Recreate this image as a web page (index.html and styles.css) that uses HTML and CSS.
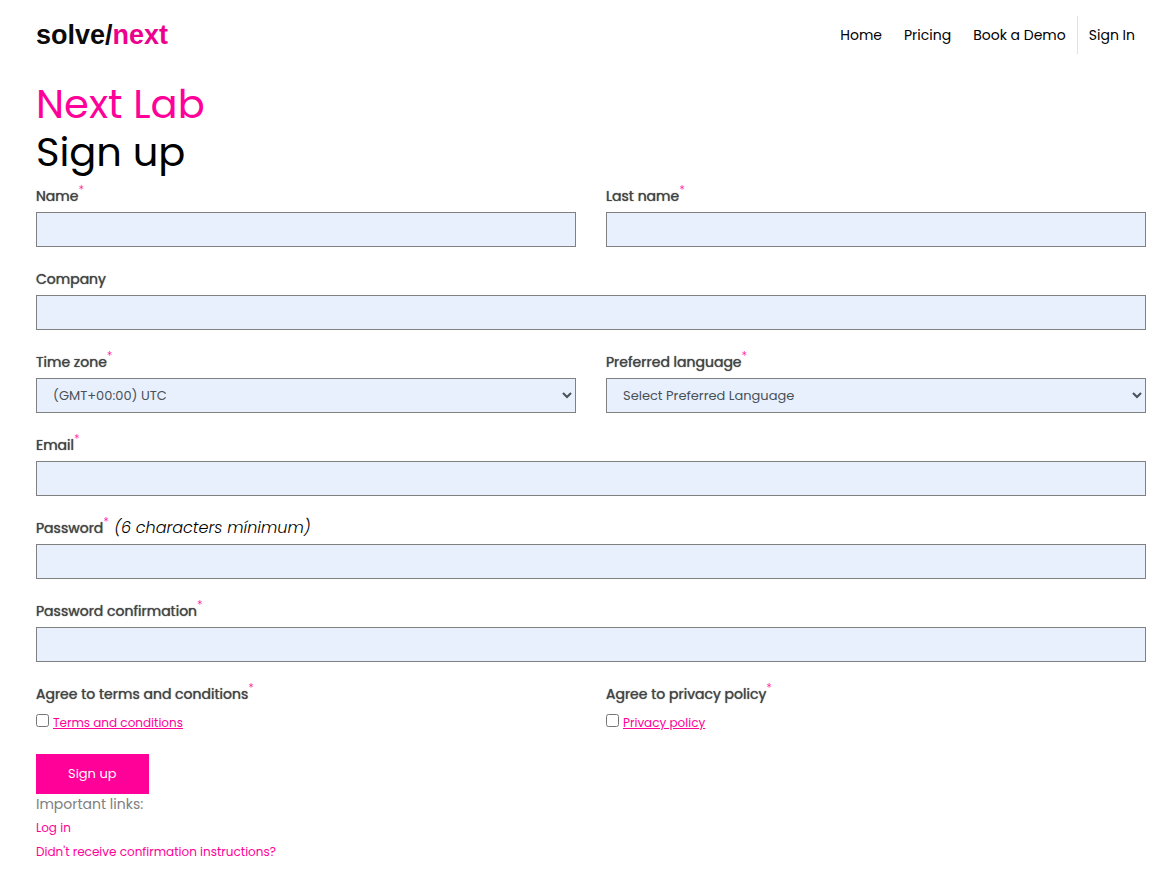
FILE: index.html
```html
<!DOCTYPE html>
<html lang="en">
<head>
  <meta charset="UTF-8">
  <meta name="viewport" content="width=device-width, initial-scale=1.0">
  <title>Next Lab - Sign up</title>
  <link rel="stylesheet" href="styles.css">
</head>
<body>
  <header class="navbar">
    <a href="#" class="logo">solve/<span>next</span></a>
    <nav class="nav-links">
      <a href="#">Home</a>
      <a href="#">Pricing</a>
      <a href="#">Book a Demo</a>
      <a href="#" class="sign-in">Sign In</a>
    </nav>
  </header>

  <main>
    <h1><span class="brand">Next Lab</span><br>Sign up</h1>

    <form action="#" method="post">
      <div class="form-row">
        <div class="field">
          <div class="field-label"><label for="name">Name<sup>*</sup></label></div>
          <input type="text" id="name" class="control" required>
        </div>
        <div class="field">
          <div class="field-label"><label for="lastName">Last name<sup>*</sup></label></div>
          <input type="text" id="lastName" class="control" required>
        </div>
      </div>

      <div class="field">
        <div class="field-label"><label for="company">Company</label></div>
        <input type="text" id="company" class="control">
      </div>

      <div class="form-row">
        <div class="field">
          <div class="field-label"><label for="timeZone">Time zone<sup>*</sup></label></div>
          <select id="timeZone" class="control">
            <option>(GMT+00:00) UTC</option>
          </select>
        </div>
        <div class="field">
          <div class="field-label"><label for="language">Preferred language<sup>*</sup></label></div>
          <select id="language" class="control">
            <option>Select Preferred Language</option>
          </select>
        </div>
      </div>

      <div class="field">
        <div class="field-label"><label for="email">Email<sup>*</sup></label></div>
        <input type="email" id="email" class="control" required>
      </div>

      <div class="field">
        <div class="field-label"><label for="password">Password<sup>*</sup></label> <em>(6 characters mínimum)</em></div>
        <input type="password" id="password" class="control" required>
      </div>

      <div class="field">
        <div class="field-label"><label for="confirmation">Password confirmation<sup>*</sup></label></div>
        <input type="password" id="confirmation" class="control" required>
      </div>

      <div class="form-row">
        <div class="field">
          <div class="field-label"><label for="terms">Agree to terms and conditions<sup>*</sup></label></div>
          <div class="check"><input type="checkbox" id="terms" required><a href="#">Terms and conditions</a></div>
        </div>
        <div class="field">
          <div class="field-label"><label for="privacy">Agree to privacy policy<sup>*</sup></label></div>
          <div class="check"><input type="checkbox" id="privacy" required><a href="#">Privacy policy</a></div>
        </div>
      </div>

      <button type="submit" class="btn">Sign up</button>
    </form>

    <div class="links">
      <p>Important links:</p>
      <a href="#">Log in</a>
      <a href="#">Didn't receive confirmation instructions?</a>
    </div>
  </main>
</body>
</html>
```
FILE: styles.css
```css
* {
  box-sizing: border-box;
}
body {
  margin: 0;
  padding: 16px 29px 20px 36px;
  font-family: Poppins, Inter, sans-serif;
  font-size: 16px;
  font-weight: 400;
  line-height: 24px;
  color: #000;
  background: #fff;
}
a {
  color: #ff0099;
  text-decoration: none;
}
.navbar {
  display: flex;
  justify-content: space-between;
  align-items: center;
  height: 38px;
}
.logo {
  font-family: "Liberation Sans", Arial, sans-serif;
  font-size: 27px;
  font-weight: bold;
  color: #0b0b0b;
}
.logo span {
  color: #ec008c;
}
.nav-links {
  display: flex;
}
.nav-links a {
  padding: 7px 11px;
  font-size: 14px;
  color: #000;
}
.nav-links .sign-in {
  border-left: 1px solid #dee2e6;
}
h1 {
  margin: 26px 0 8px;
  font-size: 40px;
  font-weight: 400;
  line-height: 48px;
}
.brand {
  color: #ff0099;
}
.form-row {
  display: grid;
  grid-template-columns: 1fr 1fr;
  column-gap: 30px;
}
.field {
  margin-bottom: 20px;
}
.field-label {
  height: 24px;
  margin-bottom: 4px;
}
.field-label label {
  margin-right: 1px;
  font-size: 14px;
  color: #444;
  text-shadow: 0 0 1px #444;
}
.field-label em {
  font-weight: 300;
}
sup {
  position: relative;
  top: -7px;
  font-size: 12px;
  font-weight: 300;
  line-height: 0;
  vertical-align: baseline;
  color: #ff0099;
  text-shadow: none;
}
.control {
  display: block;
  width: 100%;
  height: 35px;
  padding: 0 12px;
  border: 1px solid #808080;
  border-radius: 0;
  font-family: inherit;
  font-size: 13px;
  font-weight: 400;
  color: #495057;
  background-color: #e8f0fe;
}
select.control {
  padding-right: 0;
}
.check {
  height: 24px;
}
.check input {
  width: 13px;
  height: 13px;
  margin: 0 4px 0 0;
}
.check a {
  font-size: 12px;
  text-decoration: underline;
}
.btn {
  display: block;
  height: 40px;
  padding: 0 32px;
  border: none;
  font-family: inherit;
  font-size: 13px;
  font-weight: 400;
  color: #fff;
  background: #ff0099;
  cursor: pointer;
}
.links p {
  margin: 0 0 2px;
  font-size: 14px;
  line-height: 20px;
  color: #808080;
}
.links a {
  display: block;
  font-size: 12px;
}
```
